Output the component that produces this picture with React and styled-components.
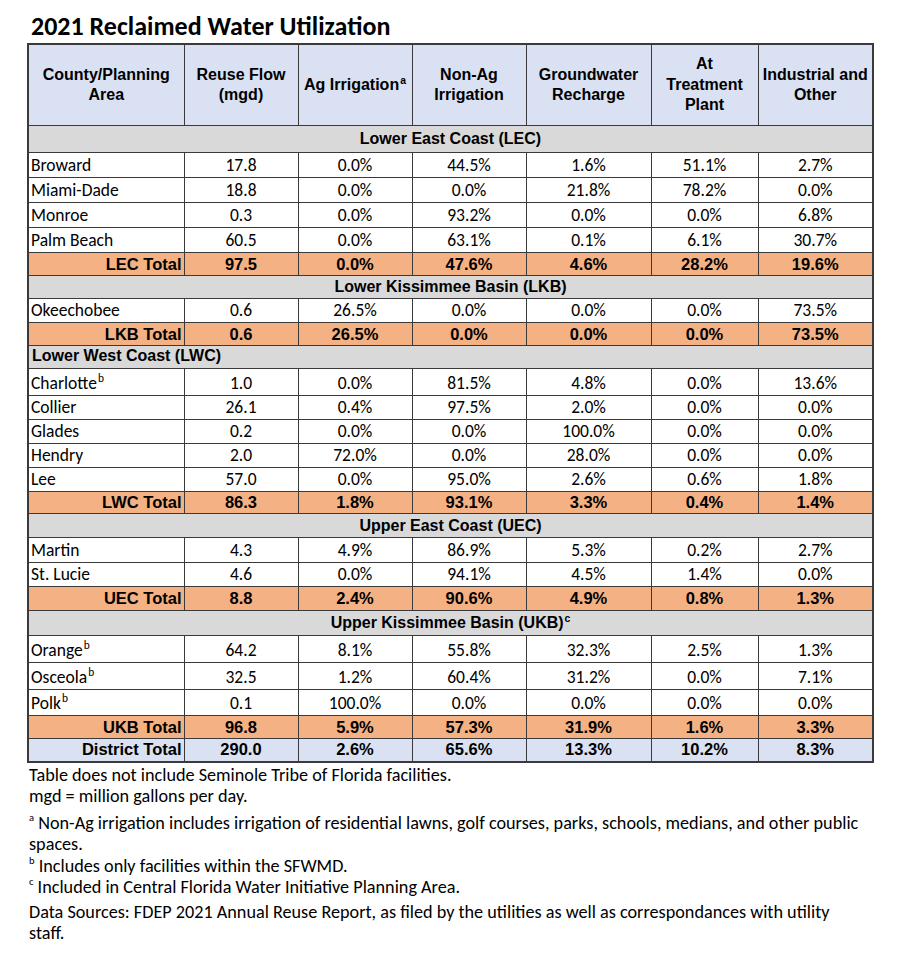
import React from 'react';
import styled, { createGlobalStyle } from 'styled-components';

const GlobalStyle = createGlobalStyle`
  body {
    margin: 0;
    background: #ffffff;
    color: #000000;
  }
`;

const calibri = `Carlito, Calibri, Lato, sans-serif`;
const arial = `"Liberation Sans", Arial, sans-serif`;

const Page = styled.div`
  width: 900px;
  height: 956px;
  padding: 13px 0 0 27px;
  box-sizing: border-box;
`;

const Title = styled.h1`
  margin: 0 0 3px 4px;
  font-family: ${calibri};
  font-size: 26px;
  font-weight: 700;
  line-height: 27px;
`;

const Table = styled.table`
  border-collapse: collapse;
  table-layout: fixed;
  width: 845px;
  border: 2px solid #3a3a3a;
`;

const Th = styled.th`
  height: 80px;
  padding: 0 3px;
  background: #d9e1f2;
  border: 1.5px solid #3a3a3a;
  font-family: ${arial};
  font-size: 16px;
  font-weight: 700;
  line-height: 20.5px;
  text-align: center;
  vertical-align: middle;
`;

const Row = styled.tr`
  height: ${(p) => p.$h}px;
`;

const RegionCell = styled.td`
  background: #d9d9d9;
  border: 1.5px solid #3a3a3a;
  padding: 0 3px;
  font-family: ${arial};
  font-size: 16px;
  font-weight: 700;
  text-align: ${(p) => (p.$left ? 'left' : 'center')};
  vertical-align: ${(p) => (p.$left ? 'top' : 'middle')};
  line-height: 20px;
`;

const Cell = styled.td`
  border: 1.5px solid #3a3a3a;
  padding: 0 2px;
  font-family: ${calibri};
  font-size: 17.5px;
  text-align: ${(p) => (p.$name ? 'left' : 'center')};
  vertical-align: bottom;
  line-height: 23px;
`;

const TotalCell = styled.td`
  background: ${(p) => (p.$district ? '#d9e1f2' : '#f4b183')};
  border: 1.5px solid #3a3a3a;
  padding: 0 2px;
  font-family: ${arial};
  font-size: 16.5px;
  font-weight: 700;
  text-align: ${(p) => (p.$name ? 'right' : 'center')};
  vertical-align: middle;
  line-height: 19px;
`;

const Sup = styled.sup`
  font-size: 0.65em;
  line-height: 0;
  vertical-align: 0.6em;
  margin-left: 1px;
`;

const NoteSup = styled.sup`
  font-size: 0.58em;
  line-height: 0;
  vertical-align: 0.75em;
`;

const Notes = styled.div`
  margin: 2px 0 0 2px;
  width: 836px;
  font-family: ${calibri};
  font-size: 18.2px;
  line-height: 21.5px;
`;

const Note = styled.p`
  margin: 0 0 ${(p) => p.$gap || 0}px 0;
`;

const headers = [
  ['County/Planning', 'Area'],
  ['Reuse Flow', '(mgd)'],
  ['Ag Irrigation'],
  ['Non-Ag', 'Irrigation'],
  ['Groundwater', 'Recharge'],
  ['At', 'Treatment', 'Plant'],
  ['Industrial and', 'Other'],
];

const sections = [
  {
    region: 'Lower East Coast (LEC)',
    h: 27,
    rows: [
      ['Broward', '', '17.8', '0.0%', '44.5%', '1.6%', '51.1%', '2.7%'],
      ['Miami-Dade', '', '18.8', '0.0%', '0.0%', '21.8%', '78.2%', '0.0%'],
      ['Monroe', '', '0.3', '0.0%', '93.2%', '0.0%', '0.0%', '6.8%'],
      ['Palm Beach', '', '60.5', '0.0%', '63.1%', '0.1%', '6.1%', '30.7%'],
    ],
    rowH: [25, 25, 25, 25],
    total: ['LEC Total', '97.5', '0.0%', '47.6%', '4.6%', '28.2%', '19.6%'],
    totalH: 23,
  },
  {
    region: 'Lower Kissimmee Basin (LKB)',
    h: 23,
    rows: [['Okeechobee', '', '0.6', '26.5%', '0.0%', '0.0%', '0.0%', '73.5%']],
    rowH: [24],
    total: ['LKB Total', '0.6', '26.5%', '0.0%', '0.0%', '0.0%', '73.5%'],
    totalH: 23,
  },
  {
    region: 'Lower West Coast (LWC)',
    left: true,
    h: 23,
    rows: [
      ['Charlotte', 'b', '1.0', '0.0%', '81.5%', '4.8%', '0.0%', '13.6%'],
      ['Collier', '', '26.1', '0.4%', '97.5%', '2.0%', '0.0%', '0.0%'],
      ['Glades', '', '0.2', '0.0%', '0.0%', '100.0%', '0.0%', '0.0%'],
      ['Hendry', '', '2.0', '72.0%', '0.0%', '28.0%', '0.0%', '0.0%'],
      ['Lee', '', '57.0', '0.0%', '95.0%', '2.6%', '0.6%', '1.8%'],
    ],
    rowH: [27, 24, 23, 24, 24],
    total: ['LWC Total', '86.3', '1.8%', '93.1%', '3.3%', '0.4%', '1.4%'],
    totalH: 22,
  },
  {
    region: 'Upper East Coast (UEC)',
    h: 24,
    rows: [
      ['Martin', '', '4.3', '4.9%', '86.9%', '5.3%', '0.2%', '2.7%'],
      ['St. Lucie', '', '4.6', '0.0%', '94.1%', '4.5%', '1.4%', '0.0%'],
    ],
    rowH: [25, 22],
    total: ['UEC Total', '8.8', '2.4%', '90.6%', '4.9%', '0.8%', '1.3%'],
    totalH: 24,
  },
  {
    region: 'Upper Kissimmee Basin (UKB)',
    sup: 'c',
    h: 25,
    rows: [
      ['Orange', 'b', '64.2', '8.1%', '55.8%', '32.3%', '2.5%', '1.3%'],
      ['Osceola', 'b', '32.5', '1.2%', '60.4%', '31.2%', '0.0%', '7.1%'],
      ['Polk', 'b', '0.1', '100.0%', '0.0%', '0.0%', '0.0%', '0.0%'],
    ],
    rowH: [27, 27, 26],
    total: ['UKB Total', '96.8', '5.9%', '57.3%', '31.9%', '1.6%', '3.3%'],
    totalH: 23,
  },
];

const district = ['District Total', '290.0', '2.6%', '65.6%', '13.3%', '10.2%', '8.3%'];

const colWidths = [156, 114, 114, 114, 125, 107, 115];

const TotalRow = ({ values, h, district: isDistrict }) => (
  <Row $h={h}>
    {values.map((v, i) => (
      <TotalCell key={i} $name={i === 0} $district={isDistrict}>
        {v}
      </TotalCell>
    ))}
  </Row>
);

const App = () => (
  <Page>
    <GlobalStyle />
    <Title>2021 Reclaimed Water Utilization</Title>
    <Table>
      <colgroup>
        {colWidths.map((w, i) => (
          <col key={i} style={{ width: w }} />
        ))}
      </colgroup>
      <thead>
        <tr>
          {headers.map((lines, i) => (
            <Th key={i}>
              {lines.map((l, j) => (
                <React.Fragment key={j}>
                  {j > 0 && <br />}
                  {l}
                  {i === 2 && <Sup>a</Sup>}
                </React.Fragment>
              ))}
            </Th>
          ))}
        </tr>
      </thead>
      <tbody>
        {sections.map((s) => (
          <React.Fragment key={s.region}>
            <Row $h={s.h}>
              <RegionCell colSpan={7} $left={s.left}>
                {s.region}
                {s.sup && <Sup>{s.sup}</Sup>}
              </RegionCell>
            </Row>
            {s.rows.map((r, ri) => (
              <Row key={r[0]} $h={s.rowH[ri]}>
                <Cell $name>
                  {r[0]}
                  {r[1] && <Sup>{r[1]}</Sup>}
                </Cell>
                {r.slice(2).map((v, i) => (
                  <Cell key={i}>{v}</Cell>
                ))}
              </Row>
            ))}
            <TotalRow values={s.total} h={s.totalH} />
          </React.Fragment>
        ))}
        <TotalRow values={district} h={23} district />
      </tbody>
    </Table>
    <Notes>
      <Note>Table does not include Seminole Tribe of Florida facilities.</Note>
      <Note $gap={5}>mgd = million gallons per day.</Note>
      <Note>
        <NoteSup>a</NoteSup> Non-Ag irrigation includes irrigation of residential lawns, golf courses, parks, schools,
        medians, and other public spaces.
      </Note>
      <Note>
        <NoteSup>b</NoteSup> Includes only facilities within the SFWMD.
      </Note>
      <Note $gap={3}>
        <NoteSup>c</NoteSup> Included in Central Florida Water Initiative Planning Area.
      </Note>
      <Note>
        Data Sources: FDEP 2021 Annual Reuse Report, as filed by the utilities as well as correspondances with utility
        staff.
      </Note>
    </Notes>
  </Page>
);

export default App;
